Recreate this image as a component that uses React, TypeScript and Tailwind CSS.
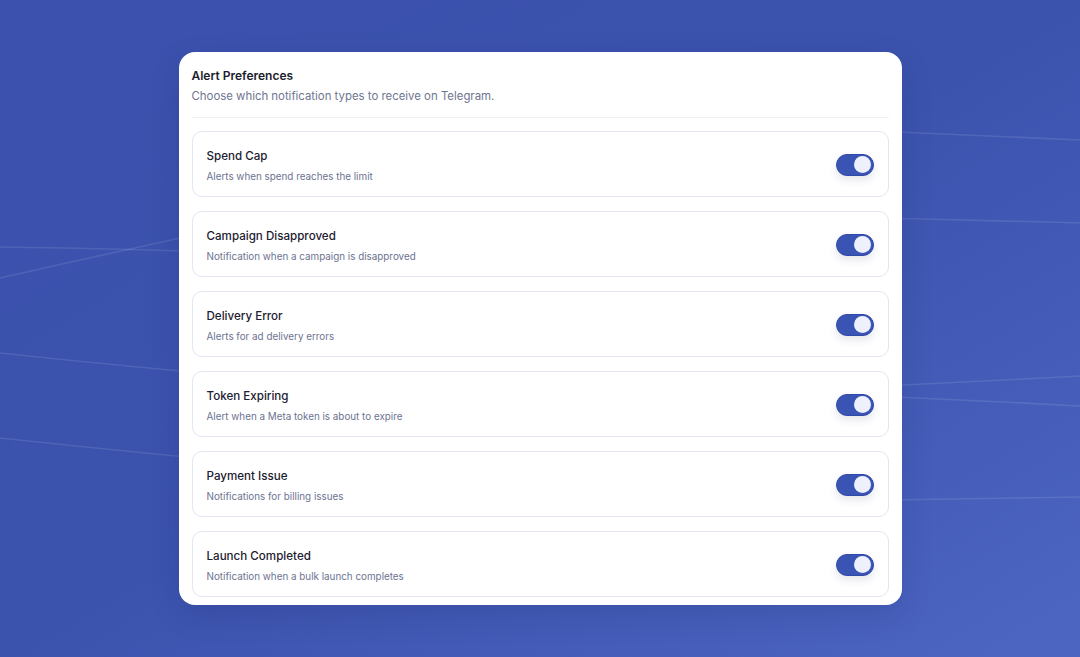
import React from 'react';

const alerts = [
  { title: 'Spend Cap', desc: 'Alerts when spend reaches the limit' },
  { title: 'Campaign Disapproved', desc: 'Notification when a campaign is disapproved' },
  { title: 'Delivery Error', desc: 'Alerts for ad delivery errors' },
  { title: 'Token Expiring', desc: 'Alert when a Meta token is about to expire' },
  { title: 'Payment Issue', desc: 'Notifications for billing issues' },
  { title: 'Launch Completed', desc: 'Notification when a bulk launch completes' },
];

const Toggle: React.FC = () => (
  <div className="mt-[1px] flex items-center justify-end w-[38px] h-[22px] rounded-full bg-[#3a54b4] border border-[#3149a8] p-[2px] shadow-[0_4px_8px_rgba(30,40,90,0.12)]">
    <div className="w-[17px] h-[17px] rounded-full bg-[#eef1fc]" />
  </div>
);

const BackgroundLines: React.FC = () => (
  <svg className="absolute inset-0 w-full h-full" viewBox="0 0 1080 657" preserveAspectRatio="none">
    <g fill="none" stroke="white" strokeOpacity="0.1" strokeWidth="1.6">
      <path d="M0 247 Q 300 250 560 275" />
      <path d="M0 278 Q 300 210 560 160" />
      <path d="M0 353 Q 300 385 560 400" />
      <path d="M0 438 Q 300 470 560 490" />
      <path d="M560 120 Q 820 128 1080 140" />
      <path d="M560 212 Q 820 216 1080 223" />
      <path d="M560 400 Q 820 390 1080 376" />
      <path d="M560 385 Q 820 392 1080 406" />
      <path d="M560 505 Q 820 500 1080 497" />
    </g>
  </svg>
);

export default function App() {
  return (
    <div
      className="relative w-[1080px] h-[657px] overflow-hidden bg-gradient-to-br from-[#3b51ad] via-[#3c53ae] to-[#4d66c2] flex justify-center pt-[52px]"
      style={{ fontFamily: 'Inter, "Noto Sans", sans-serif' }}
    >
      <BackgroundLines />
      <div className="relative w-[723px] h-[553px] bg-white rounded-[16px] px-[13px] pt-[15px] shadow-[0_10px_30px_rgba(20,30,80,0.15)]">
        <h1 className="text-[12px] leading-[18px] font-semibold text-[#1b1d2c]">Alert Preferences</h1>
        <p className="mt-[2px] text-[11.4px] leading-[18px] text-[#6e7591]">
          Choose which notification types to receive on Telegram.
        </p>
        <div className="mt-[12px] h-px bg-[#eef0f5]" />
        <div className="mt-[13px] flex flex-col gap-[14px]">
          {alerts.map((a) => (
            <div
              key={a.title}
              className="flex items-center justify-between h-[66px] rounded-[10px] border border-[#e3e6f2] pl-[14px] pr-[14px]"
            >
              <div className="pt-[3px]">
                <div className="text-[11.6px] leading-[16px] font-medium text-[#1d2030]">{a.title}</div>
                <div className="mt-[5px] text-[9.85px] leading-[14px] text-[#6c7391]">{a.desc}</div>
              </div>
              <Toggle />
            </div>
          ))}
        </div>
      </div>
    </div>
  );
}
